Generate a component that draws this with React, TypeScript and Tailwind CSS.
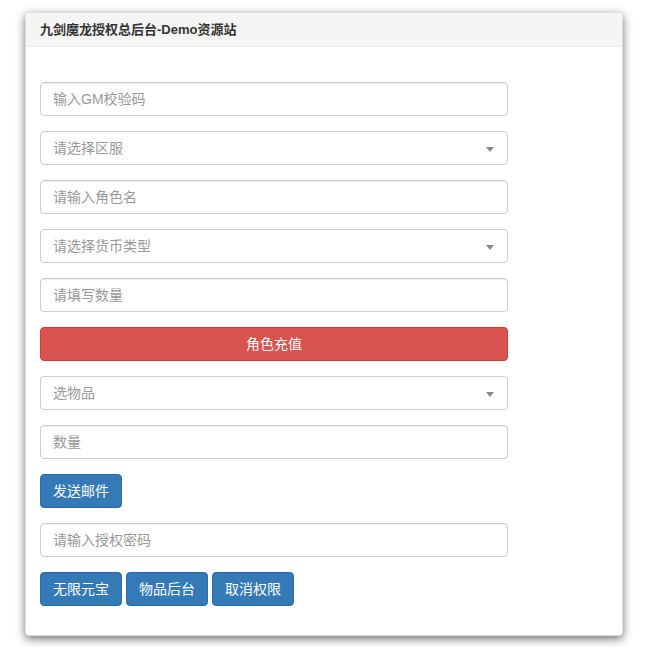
import React, { FC } from 'react';

const font = { fontFamily: '"Liberation Sans", "Noto Sans CJK SC", sans-serif' };

const TextInput: FC<{ placeholder: string }> = ({ placeholder }) => (
  <input
    type="text"
    placeholder={placeholder}
    className="block w-[468px] h-[34px] px-3 border border-[#ccc] rounded-[4px] text-[14px] text-[#555] placeholder:text-[#999] shadow-[inset_0_1px_1px_rgba(0,0,0,0.075)] outline-none"
  />
);

const SelectBox: FC<{ placeholder: string }> = ({ placeholder }) => (
  <div className="relative w-[468px] h-[34px] px-3 flex items-center border border-[#ccc] rounded-[4px] text-[14px] text-[#999] bg-white">
    <span>{placeholder}</span>
    <span className="absolute right-[13px] top-[15px] w-0 h-0 border-l-[4px] border-r-[4px] border-t-[5px] border-l-transparent border-r-transparent border-t-[#888]"></span>
  </div>
);

const BlueButton: FC<{ label: string }> = ({ label }) => (
  <button
    type="button"
    className="h-[34px] w-[82px] bg-[#337ab7] border border-[#2e6da4] rounded-[4px] text-white text-[14px]"
  >
    {label}
  </button>
);

const App: FC = () => {
  return (
    <div className="w-[647px] h-[648px] bg-white pt-[12px] pl-[25px]" style={font}>
      <div className="w-[598px] h-[624px] bg-white rounded-[4px] border border-[#ddd] shadow-[0_3px_10px_rgba(0,0,0,0.55)] overflow-hidden">
        <div className="h-[34px] bg-[#f5f5f5] border-b border-[#eee] px-[14px] flex items-center text-[13px] font-bold text-[#333]">
          九剑魔龙授权总后台-Demo资源站
        </div>
        <div className="pl-[14px] pt-[35px] flex flex-col gap-[15px]">
          <TextInput placeholder="输入GM校验码" />
          <SelectBox placeholder="请选择区服" />
          <TextInput placeholder="请输入角色名" />
          <SelectBox placeholder="请选择货币类型" />
          <TextInput placeholder="请填写数量" />
          <button
            type="button"
            className="w-[468px] h-[34px] bg-[#d9534f] border border-[#d43f3a] rounded-[4px] text-white text-[14px]"
          >
            角色充值
          </button>
          <SelectBox placeholder="选物品" />
          <TextInput placeholder="数量" />
          <div>
            <BlueButton label="发送邮件" />
          </div>
          <TextInput placeholder="请输入授权密码" />
          <div className="flex gap-[4px]">
            <BlueButton label="无限元宝" />
            <BlueButton label="物品后台" />
            <BlueButton label="取消权限" />
          </div>
        </div>
      </div>
    </div>
  );
};

export default App;
